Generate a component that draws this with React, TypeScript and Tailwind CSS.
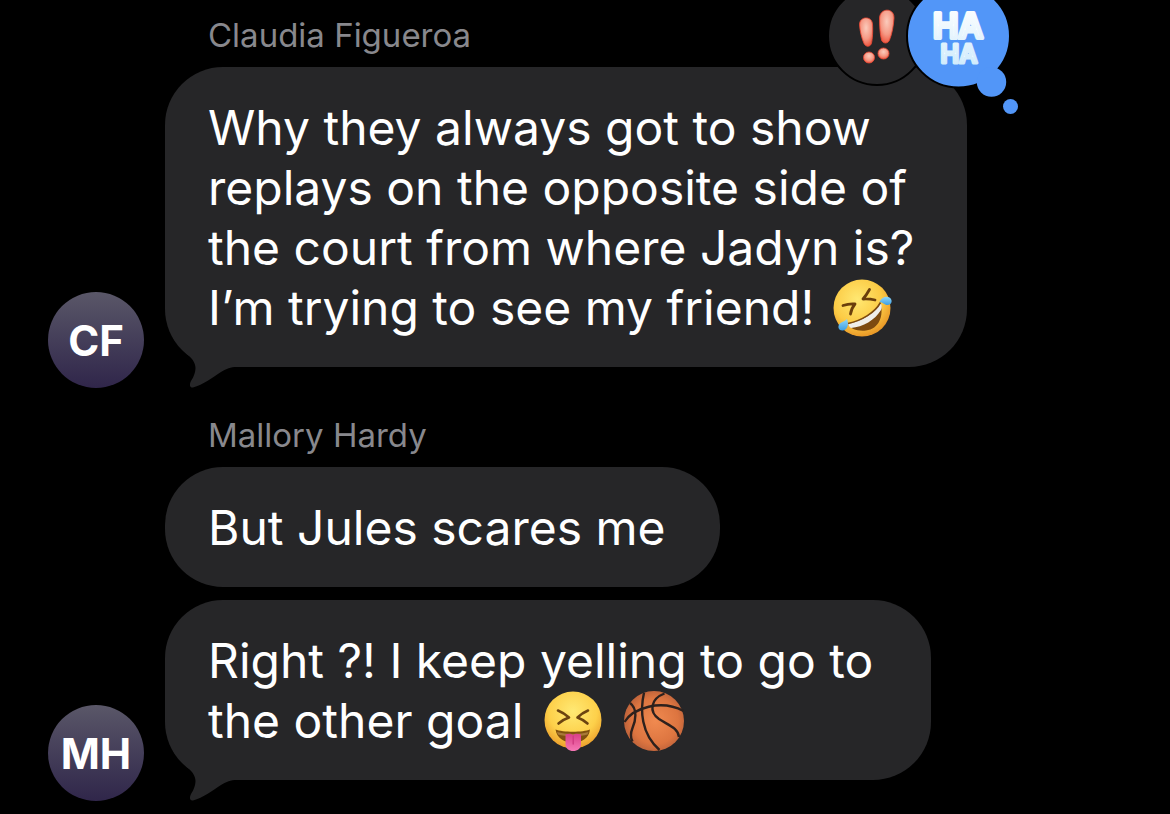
import type { ReactNode } from "react";

interface Message {
  id: number;
  body: ReactNode;
  widthClass: string;
  hasTail?: boolean;
  reactions?: ReactNode;
}

interface MessageGroup {
  sender: string;
  initials: string;
  messages: Message[];
}

function RoflEmoji() {
  return (
    <svg
      role="img"
      aria-label="Rolling on the floor laughing"
      viewBox="0 0 60 60"
      className="inline-block size-15 shrink-0"
    >
      <defs>
        <radialGradient id="rofl-face" cx="0.42" cy="0.35" r="0.65">
          <stop offset="0" stopColor="#ffe872" />
          <stop offset="0.65" stopColor="#fccb45" />
          <stop offset="1" stopColor="#ea9a28" />
        </radialGradient>
        <linearGradient id="rofl-tear" x1="0" y1="0" x2="0" y2="1">
          <stop offset="0" stopColor="#8fd6fa" />
          <stop offset="1" stopColor="#3d9fe2" />
        </linearGradient>
      </defs>
      <circle cx="30" cy="30" r="28.5" fill="url(#rofl-face)" />
      <g fill="none" stroke="#6b3f0c" strokeWidth="2.8" strokeLinecap="round" strokeLinejoin="round">
        <path d="M11 27.5 Q17 25.5 23 26 Q19.5 30 18.5 36" />
        <path d="M37.5 11.5 Q34.5 17 31 21 Q37 20.5 43 22" />
      </g>
      <path d="M16 46 C30 43 43 35 48.5 25 C52 38 47 51 34 52.5 C26 53.5 18 51 16 46Z" fill="#7d4a10" />
      <path d="M16 46 C30 43 43 35 48.5 25 C50 27 50 30 49 32 C43 42 31 49 19 50 C17.5 49 16.5 47.5 16 46Z" fill="#f0eeea" />
      <path d="M16 45.5 C30 42.5 43 34.5 48.5 24.5" fill="none" stroke="#7d4a10" strokeWidth="1.6" />
      <path d="M15 41 C17 46 16 51.5 11 52.5 C6 53 5 47.5 8.5 45 C11 43.5 13 43 15 41Z" fill="url(#rofl-tear)" />
      <path d="M47.5 24 C50 19 54 18 57.5 19.5 C61 22 60 26.5 56 27 C52.5 27.5 51 24 47.5 24Z" fill="url(#rofl-tear)" />
    </svg>
  );
}

function TongueEmoji() {
  return (
    <svg
      role="img"
      aria-label="Squinting face with tongue"
      viewBox="0 0 60 62"
      className="inline-block h-[62px] w-15 shrink-0"
    >
      <defs>
        <radialGradient id="tongue-face" cx="0.5" cy="0.35" r="0.65">
          <stop offset="0" stopColor="#ffe974" />
          <stop offset="0.65" stopColor="#fdd04a" />
          <stop offset="1" stopColor="#eb9f2c" />
        </radialGradient>
        <linearGradient id="tongue-pink" x1="0" y1="0" x2="0" y2="1">
          <stop offset="0" stopColor="#d93f86" />
          <stop offset="1" stopColor="#f677b5" />
        </linearGradient>
      </defs>
      <circle cx="30" cy="30" r="28.5" fill="url(#tongue-face)" />
      <g fill="none" stroke="#6b4310" strokeWidth="2.6" strokeLinecap="round" strokeLinejoin="round">
        <path d="M15 20.5 Q21 23 26 27.5 Q20 29.5 15.5 33.5" />
        <path d="M45 20.5 Q39 23 34.5 27.5 Q40 29.5 44.5 33.5" />
      </g>
      <path d="M12.5 39.5 C20 42.5 40 42.5 47 39.5 C46 49 38 52.5 30 52.5 C22 52.5 14 49 12.5 39.5Z" fill="#80500f" />
      <path d="M14 42 C22 44.5 38 44.5 45.5 42 L44.5 44.5 C38 46.5 22 46.5 15 44.5Z" fill="#a87a38" />
      <path d="M22.5 44.5 C25 43.5 28 43.5 30 45 C32 43.5 35 43.5 38 44.5 V54 C38 58.5 34.5 61 30.2 61 C26 61 22.5 58.5 22.5 54Z" fill="url(#tongue-pink)" />
      <path d="M30.2 46 V54" stroke="#cf3a80" strokeWidth="1.4" strokeLinecap="round" />
    </svg>
  );
}

function BasketballEmoji() {
  return (
    <svg
      role="img"
      aria-label="Basketball"
      viewBox="0 0 62 62"
      className="inline-block size-[62px] shrink-0"
    >
      <defs>
        <radialGradient id="ball" cx="0.52" cy="0.5" r="0.55">
          <stop offset="0" stopColor="#f08a50" />
          <stop offset="0.7" stopColor="#dd7540" />
          <stop offset="1" stopColor="#b9603a" />
        </radialGradient>
      </defs>
      <circle cx="31" cy="31" r="30" fill="url(#ball)" />
      <g fill="none" stroke="#2d211d" strokeWidth="2.4">
        <path d="M1.5 32 C10 18 38 9 60.5 21" />
        <path d="M21 2.7 C17 20 18 44 36.5 60" />
        <path d="M7 13 C15 19 12.5 31 9.5 38 C7.5 43 7.5 48 9.5 51.5" />
        <path d="M41.5 3.5 C27 9 26 22 36 29 C46 35.5 55 38 56 47" />
      </g>
    </svg>
  );
}

function Reactions() {
  return (
    <svg
      role="img"
      aria-label="Reactions: emphasized, laughed"
      viewBox="826 -18 196 136"
      className="absolute -top-[85px] -right-[55px] h-[136px] w-[196px]"
    >
      <defs>
        <radialGradient id="bang" cx="0.5" cy="0.35" r="0.65">
          <stop offset="0" stopColor="#fbcbbc" />
          <stop offset="0.6" stopColor="#f59a86" />
          <stop offset="1" stopColor="#ee5a44" />
        </radialGradient>
        <linearGradient id="haha" x1="0" y1="0" x2="0" y2="1">
          <stop offset="0" stopColor="#ffffff" />
          <stop offset="1" stopColor="#cdeafc" />
        </linearGradient>
      </defs>
      <circle cx="877" cy="36" r="49" fill="#262628" stroke="#000" strokeWidth="2" />
      <g fill="url(#bang)" stroke="#ee4a36" strokeWidth="0.8">
        <path d="M859.5 25 C859 16 872 15.5 872.5 24 C873 31 872.5 39 871.5 43 C870.5 47 866 47.5 864 43.5 C861.5 38 860 31 859.5 25Z" />
        <path d="M879.5 18 C880 7.500 894.500 7.500 894 18 C893.500 26 892 34 889.500 40 C888 44 883 44 881.500 40 C880 34 879.500 26 879.500 18Z" />
        <circle cx="869" cy="57.5" r="5.5" />
        <circle cx="883.5" cy="53.5" r="5.5" />
      </g>
      <circle cx="958.5" cy="36" r="51.5" fill="#5296f8" stroke="#000" strokeWidth="2" />
      <circle cx="991.5" cy="82" r="14.7" fill="#5296f8" />
      <circle cx="1010.5" cy="106.500" r="7.5" fill="#5296f8" />
      <text
        fill="#ffffff"
        stroke="url(#haha)"
        strokeLinejoin="round"
        textAnchor="middle"
        className="font-['Inter',sans-serif] font-semibold"
      >
        <tspan x="958" y="38" fontSize="34" strokeWidth="4">
          HA
        </tspan>
        <tspan x="959" y="63" fontSize="25" strokeWidth="3">
          HA
        </tspan>
      </text>
    </svg>
  );
}

function BubbleTail() {
  return (
    <svg
      aria-hidden="true"
      viewBox="0 0 66 50"
      className="absolute -bottom-[21px] left-2 h-[50px] w-[66px] fill-[#262628]"
    >
      <path d="M0 0 C5 7 10 12 15 17 C20 21 22.5 26 22.5 30 C22.5 35 20 40 18 43 C16 47 17 50 20 49.5 C30 47 40 39 48 34 C54 30.5 57 29 64 29 V0Z" />
    </svg>
  );
}

function Bubble({ message }: { message: Message }) {
  return (
    <div
      className={`relative w-full rounded-[58px] bg-[#262628] px-[43px] pt-[31px] pb-[29px] text-5xl leading-[60px] text-white ${message.widthClass}`}
    >
      {message.hasTail && <BubbleTail />}
      <div className="relative">{message.body}</div>
      {message.reactions}
    </div>
  );
}

const groups: MessageGroup[] = [
  {
    sender: "Claudia Figueroa",
    initials: "CF",
    messages: [
      {
        id: 1,
        widthClass: "max-w-[802px]",
        hasTail: true,
        reactions: <Reactions />,
        body: (
          <>
            <p className="whitespace-nowrap">Why they always got to show</p>
            <p className="whitespace-nowrap">replays on the opposite side of</p>
            <p className="whitespace-nowrap">the court from where Jadyn is?</p>
            <p className="flex h-15 items-center gap-[18px] whitespace-nowrap">
              I’m trying to see my friend! <RoflEmoji />
            </p>
          </>
        ),
      },
    ],
  },
  {
    sender: "Mallory Hardy",
    initials: "MH",
    messages: [
      { id: 2, widthClass: "max-w-[555px]", body: <p className="whitespace-nowrap">But Jules scares me</p> },
      {
        id: 3,
        widthClass: "max-w-[766px]",
        hasTail: true,
        body: (
          <>
            <p className="whitespace-nowrap">Right ?! I keep yelling to go to</p>
            <p className="flex h-15 items-center gap-5 whitespace-nowrap">
              the other goal <TongueEmoji /> <BasketballEmoji />
            </p>
          </>
        ),
      },
    ],
  },
];

export default function App() {
  return (
    <main className="flex min-h-screen flex-col gap-[27px] overflow-hidden bg-black pt-[15px] pb-3 pl-12 font-['Inter',sans-serif]">
      {groups.map((group) => (
        <section key={group.sender} className="flex items-end gap-[21px]">
          <div className="flex size-24 shrink-0 items-center justify-center rounded-full bg-linear-to-b from-[#5a5768] to-[#30264a] text-[42px] font-bold text-white">
            {group.initials}
          </div>
          <div className="flex min-w-0 flex-1 flex-col pb-[21px]">
            <h2 className="mb-3 pl-[43px] text-[33px] leading-10 text-[#88888d]">{group.sender}</h2>
            <div className="flex flex-col gap-[13px]">
              {group.messages.map((message) => (
                <Bubble key={message.id} message={message} />
              ))}
            </div>
          </div>
        </section>
      ))}
    </main>
  );
}
